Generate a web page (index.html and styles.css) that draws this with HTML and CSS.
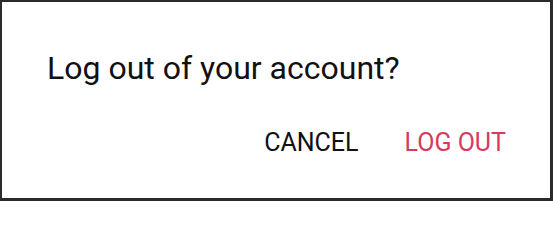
FILE: index.html
```html
<!DOCTYPE html>
<html>
<head>
<meta charset="utf-8">
<link rel="stylesheet" href="styles.css">
</head>
<body>
<div class="dialog">
  <div class="title">Log out of your account?</div>
  <div class="actions">
    <button class="btn btn-cancel">CANCEL</button>
    <button class="btn btn-logout">LOG OUT</button>
  </div>
</div>
</body>
</html>
```
FILE: styles.css
```css
html, body {
  margin: 0;
  padding: 0;
  background: #ffffff;
}
.dialog {
  box-sizing: border-box;
  width: 553px;
  height: 201px;
  border-style: solid;
  border-color: #2b2b2b;
  border-width: 2px 3px 3px 2px;
  background: #ffffff;
  font-family: Roboto, "Liberation Sans", sans-serif;
  display: flex;
  flex-direction: column;
  padding: 46px 44px 0 45px;
}
.title {
  font-size: 32px;
  line-height: 40px;
  color: #111111;
}
.actions {
  display: flex;
  justify-content: flex-end;
  gap: 46px;
  margin-top: 40px;
}
.btn {
  font-family: inherit;
  font-size: 25px;
  line-height: 30px;
  background: none;
  border: none;
  padding: 0;
  margin: 0;
  letter-spacing: 0;
}
.btn-cancel {
  color: #111111;
}
.btn-logout {
  color: #d63a5e;
}
```
